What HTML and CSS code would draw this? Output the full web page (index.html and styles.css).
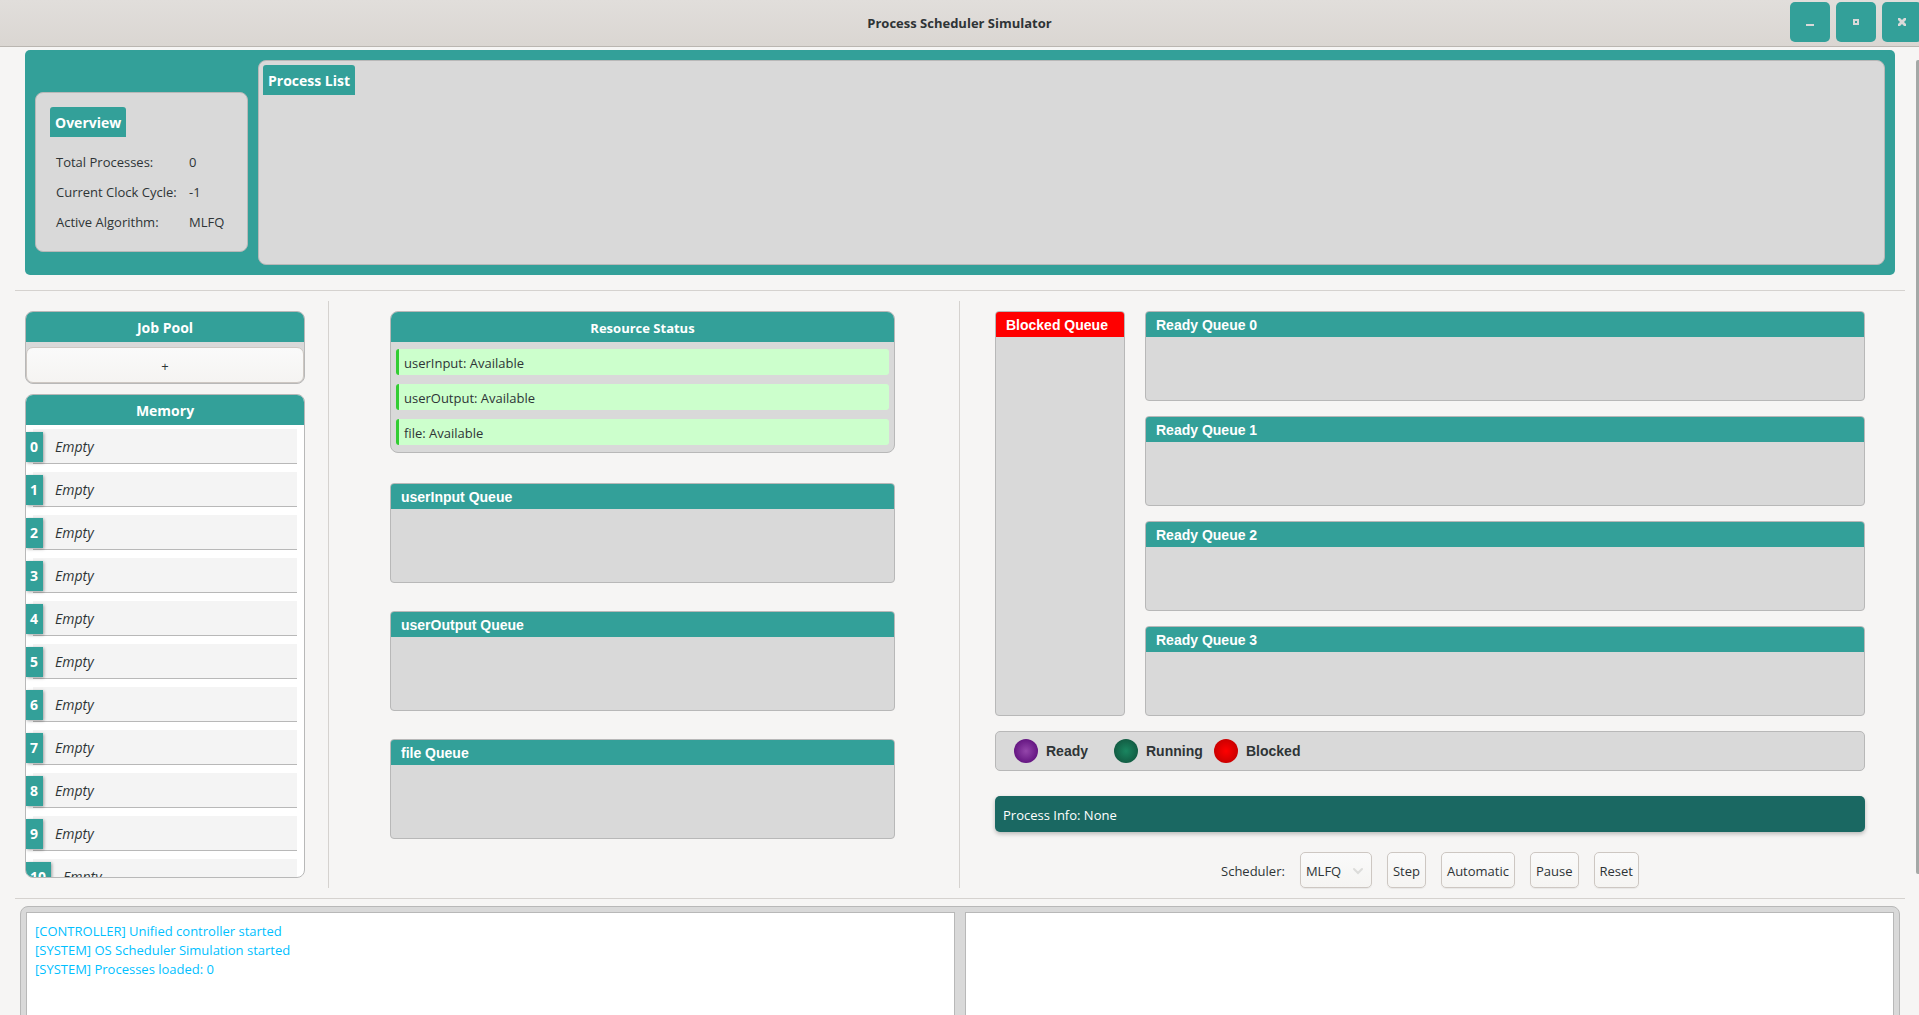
FILE: index.html
```html
<!DOCTYPE html>
<html lang="en">
<head>
<meta charset="utf-8">
<title>Process Scheduler Simulator</title>
<link rel="stylesheet" href="styles.css">
</head>
<body>
<header class="titlebar">
  <h1 class="titlebar-title">Process Scheduler Simulator</h1>
  <div class="window-controls">
    <button class="window-button" type="button" aria-label="Minimize"><svg width="8" height="8" viewBox="0 0 8 8"><path d="M0 6h8v2H0z"/></svg></button>
    <button class="window-button" type="button" aria-label="Maximize"><svg width="8" height="8" viewBox="0 0 8 8"><path fill-rule="evenodd" d="M1 1h6v6H1zM3 3v2h2V3z"/></svg></button>
    <button class="window-button" type="button" aria-label="Close"><svg width="8" height="8" viewBox="0 0 8 8"><path d="M0 0h2l2 2 2-2h2v2L6 4l2 2v2H6L4 6 2 8H0V6l2-2-2-2z"/></svg></button>
  </div>
</header>

<main class="content">
  <section class="summary">
    <div class="overview">
      <h2 class="tab-title">Overview</h2>
      <dl class="stats">
        <dt>Total Processes:</dt><dd>0</dd>
        <dt>Current Clock Cycle:</dt><dd>-1</dd>
        <dt>Active Algorithm:</dt><dd>MLFQ</dd>
      </dl>
    </div>
    <div class="process-list">
      <h2 class="tab-title">Process List</h2>
    </div>
  </section>

  <hr class="rule rule-top">

  <div class="workspace">
    <div class="column storage">
      <section class="card">
        <h2 class="card-title">Job Pool</h2>
        <button class="button add-job" type="button">+</button>
      </section>
      <section class="card memory">
        <h2 class="card-title">Memory</h2>
        <ol class="memory-list">
          <li class="slot"><span class="slot-index">0</span><span class="slot-value">Empty</span></li>
          <li class="slot"><span class="slot-index">1</span><span class="slot-value">Empty</span></li>
          <li class="slot"><span class="slot-index">2</span><span class="slot-value">Empty</span></li>
          <li class="slot"><span class="slot-index">3</span><span class="slot-value">Empty</span></li>
          <li class="slot"><span class="slot-index">4</span><span class="slot-value">Empty</span></li>
          <li class="slot"><span class="slot-index">5</span><span class="slot-value">Empty</span></li>
          <li class="slot"><span class="slot-index">6</span><span class="slot-value">Empty</span></li>
          <li class="slot"><span class="slot-index">7</span><span class="slot-value">Empty</span></li>
          <li class="slot"><span class="slot-index">8</span><span class="slot-value">Empty</span></li>
          <li class="slot"><span class="slot-index">9</span><span class="slot-value">Empty</span></li>
          <li class="slot"><span class="slot-index">10</span><span class="slot-value">Empty</span></li>
        </ol>
      </section>
    </div>

    <div class="divider"></div>

    <div class="column resources">
      <section class="card">
        <h2 class="card-title">Resource Status</h2>
        <ul class="resource-list">
          <li class="resource">userInput: Available</li>
          <li class="resource">userOutput: Available</li>
          <li class="resource">file: Available</li>
        </ul>
      </section>
      <section class="queue resource-queue"><h2 class="queue-title">userInput Queue</h2></section>
      <section class="queue resource-queue"><h2 class="queue-title">userOutput Queue</h2></section>
      <section class="queue resource-queue"><h2 class="queue-title">file Queue</h2></section>
    </div>

    <div class="divider"></div>

    <div class="column scheduling">
      <div class="queues">
        <section class="queue"><h2 class="queue-title blocked-title">Blocked Queue</h2></section>
        <div class="ready-queues">
          <section class="queue ready-queue"><h2 class="queue-title">Ready Queue 0</h2></section>
          <section class="queue ready-queue"><h2 class="queue-title">Ready Queue 1</h2></section>
          <section class="queue ready-queue"><h2 class="queue-title">Ready Queue 2</h2></section>
          <section class="queue ready-queue"><h2 class="queue-title">Ready Queue 3</h2></section>
        </div>
      </div>
      <ul class="legend">
        <li class="legend-item"><span class="dot dot-ready"></span>Ready</li>
        <li class="legend-item"><span class="dot dot-running"></span>Running</li>
        <li class="legend-item"><span class="dot dot-blocked"></span>Blocked</li>
      </ul>
      <p class="process-info">Process Info: None</p>
      <div class="controls">
        <label class="controls-label" for="scheduler">Scheduler:</label>
        <div class="select-wrap">
          <select class="button select" id="scheduler"><option>MLFQ</option></select>
          <svg class="select-arrow" width="12" height="8" viewBox="0 0 12 8"><path d="M2 2l4 4 4-4" fill="none" stroke="#dcdcda" stroke-width="2" stroke-linecap="round"/></svg>
        </div>
        <button class="button" type="button">Step</button>
        <button class="button" type="button">Automatic</button>
        <button class="button" type="button">Pause</button>
        <button class="button" type="button">Reset</button>
      </div>
    </div>
  </div>

  <hr class="rule">

  <section class="logs">
    <textarea class="log" readonly aria-label="System log">[CONTROLLER] Unified controller started
[SYSTEM] OS Scheduler Simulation started
[SYSTEM] Processes loaded: 0</textarea>
    <textarea class="log" readonly aria-label="Process log"></textarea>
  </section>

  <div class="scroll-thumb"></div>
</main>
</body>
</html>
```

FILE: styles.css
```css
:root {
  --teal: #33a099;
  --teal-dark: #1a6862;
  --panel: #d9d9d9;
  --line: #b8b8b8;
  --rule: #d5d2cf;
  --page: #f6f5f4;
  --text: #2e3436;
}

* { box-sizing: border-box; }

h1, h2, p, ul, ol, dl, dd { margin: 0; padding: 0; }
ul, ol { list-style: none; }

body {
  margin: 0;
  height: 100vh;
  overflow: hidden;
  display: flex;
  flex-direction: column;
  background: var(--page);
  color: var(--text);
  font: 13px/20px "Open Sans", "Noto Sans", sans-serif;
}

button, select, textarea { font: inherit; color: inherit; }

/* Title bar */
.titlebar {
  flex: none;
  display: grid;
  grid-template-columns: 1fr auto 1fr;
  height: 47px;
  overflow: hidden;
  border-bottom: 1px solid #bab6b1;
  background: linear-gradient(#e1dedb, #dad6d2);
}
.titlebar-title {
  grid-column: 2;
  align-self: center;
  font-size: 13px;
  line-height: 20px;
}
.window-controls {
  display: flex;
  justify-content: flex-end;
  gap: 6px;
  margin-right: -3px;
  padding-top: 2px;
}
.window-button {
  display: grid;
  place-items: center;
  width: 40px;
  height: 40px;
  padding: 0;
  border: 0;
  border-radius: 5px;
  background: var(--teal);
}
.window-button svg { fill: var(--panel); }

.content {
  position: relative;
  flex: 1;
  min-height: 0;
  overflow: hidden;
  padding: 3px 14px 0 15px;
}
.rule { margin: 10px 0 7px; border: 0; border-top: 1px solid var(--rule); }
.rule-top { margin: 15px 0 10px; }
.scroll-thumb {
  position: absolute;
  top: 13px;
  right: 0;
  bottom: 141px;
  width: 3px;
  border-radius: 2px 0 0 2px;
  background: #a4a8a6;
}

/* Overview and process list */
.summary {
  display: flex;
  align-items: center;
  gap: 10px;
  margin: 0 10px;
  padding: 10px;
  border-radius: 5px;
  background: var(--teal);
}
.overview, .process-list {
  border: 1px solid var(--line);
  border-radius: 8px;
  background: var(--panel);
}
.overview { width: 213px; height: 160px; margin-top: 19px; padding: 14px; }
.process-list { flex: 1; height: 205px; padding: 4px; }
.tab-title {
  width: fit-content;
  padding: 6px 5px 4px;
  border-radius: 3px 3px 0 0;
  background: var(--teal);
  color: #fff;
  font-size: 14px;
  line-height: 20px;
}
.stats {
  display: grid;
  grid-template-columns: 123px auto;
  gap: 10px;
  padding: 15px 6px;
}

/* Three work columns */
.workspace { display: grid; grid-template-columns: 313px 1px 2fr 1px 3fr; }
.divider { background: var(--rule); }
.column { display: flex; flex-direction: column; }

.card {
  overflow: hidden;
  border: 1px solid var(--line);
  border-radius: 8px;
  background: var(--panel);
}
.card-title {
  padding: 6px 5px 4px;
  background: var(--teal);
  color: #fff;
  font-size: 13px;
  line-height: 20px;
  text-align: center;
}

.button {
  height: 36px;
  padding: 1px 5px 0;
  border: 1px solid #cdc7c2;
  border-radius: 5px;
  background: linear-gradient(#fafafa, #f5f4f2);
  box-shadow: 0 1px 1px rgba(0, 0, 0, .06);
}

.storage { gap: 10px; padding: 10px 23px 10px 10px; }
.storage .card-title { font-size: 14px; }
.add-job { display: block; width: 100%; margin-top: 5px; border-radius: 7px; }

.memory { flex: 1; display: flex; flex-direction: column; background: #fff; }
.memory-list {
  flex: 1;
  contain: size;
  overflow: hidden;
  display: flex;
  flex-direction: column;
  gap: 8px;
  padding-top: 4px;
  font-size: 14px;
}
.slot {
  flex: none;
  display: flex;
  align-items: center;
  gap: 12px;
  height: 35px;
  background: linear-gradient(var(--line), var(--line)) 7px 100% / calc(100% - 14px) 1px no-repeat,
    linear-gradient(#f4f4f4, #f4f4f4) 7px 0 / calc(100% - 14px) 100% no-repeat;
}
.slot-index {
  padding: 5px 5px 5px 4px;
  background: var(--teal);
  box-shadow: 1px 1px 3px rgba(0, 0, 0, .35);
  color: #fff;
  font-weight: 700;
}
.slot-value { font-style: italic; }

.resources { gap: 28px; padding: 10px 64px 10px 61px; }
.resource-list {
  display: flex;
  flex-direction: column;
  gap: 9px;
  padding: 7px 5px;
}
.resources .card { margin-bottom: 2px; }
.resource {
  height: 26px;
  padding: 4px 5px;
  border-left: 3px solid #32cd32;
  border-radius: 3px;
  background: #ccffcc;
}

/* Queues */
.queue {
  overflow: hidden;
  border: 1px solid var(--line);
  border-radius: 4px;
  background: var(--panel);
}
.queue-title {
  padding: 3px 10px 2px;
  background: var(--teal);
  color: #fff;
  font: bold 14px/20px "Liberation Sans", Arial, sans-serif;
}
.blocked-title { background: #f00; }
.resource-queue { height: 100px; }
.ready-queue { height: 90px; }

.scheduling { padding: 10px 40px 0 35px; }
.queues { display: grid; grid-template-columns: 130px 1fr; gap: 20px; }
.ready-queues { display: flex; flex-direction: column; gap: 15px; }

.legend {
  display: grid;
  grid-template-columns: 100px 100px 100px;
  align-items: center;
  height: 40px;
  margin-top: 15px;
  padding: 0 18px;
  border: 1px solid var(--line);
  border-radius: 5px;
  background: var(--panel);
  font: bold 14px/20px "Liberation Sans", Arial, sans-serif;
}
.legend-item { display: flex; align-items: center; gap: 8px; }
.dot { width: 24px; height: 24px; border-radius: 50%; }
.dot-ready { background: radial-gradient(circle, #9446ab, #641581 72%); }
.dot-running { background: radial-gradient(circle, #1a8660, #125c43 72%); }
.dot-blocked { background: radial-gradient(circle, #f00, #ca0000 72%); }

.process-info {
  margin-top: 25px;
  padding: 9px 8px 7px;
  border-radius: 5px;
  background: var(--teal-dark);
  box-shadow: 0 2px 4px rgba(0, 0, 0, .25);
  color: #fff;
}

.controls {
  display: flex;
  align-items: center;
  justify-content: center;
  gap: 15px;
  margin-top: 20px;
}
.controls-label { padding-top: 1px; }
.select-wrap { position: relative; }
.select { display: block; width: 72px; appearance: none; }
.select-arrow { position: absolute; top: 15px; right: 8px; pointer-events: none; }

/* Logs */
.logs {
  display: flex;
  gap: 10px;
  margin: 0 5px;
  padding: 5px;
  border: 1px solid var(--line);
  border-radius: 8px;
  background: var(--panel);
}
.log {
  display: block;
  flex: 1;
  height: 200px;
  padding: 9px 8px;
  border: 1px solid var(--line);
  background: #fff;
  color: #00bfff;
  font-size: 13px;
  line-height: 19px;
  resize: none;
}
```
